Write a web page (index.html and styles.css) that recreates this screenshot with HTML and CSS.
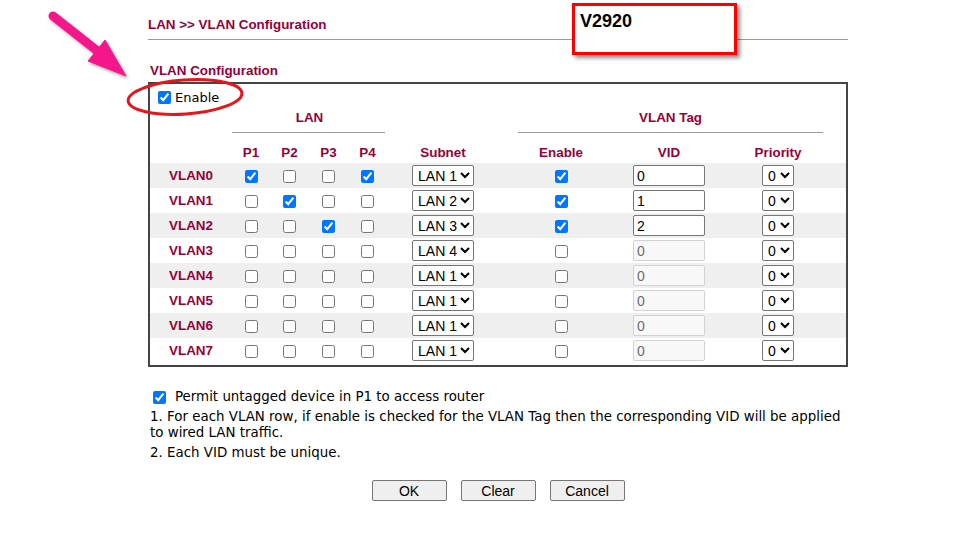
FILE: index.html
```html
<!DOCTYPE html>
<html lang="en">
<head>
    <meta charset="UTF-8">
    <title>LAN >> VLAN Configuration</title>
    <link rel="stylesheet" href="styles.css">
</head>
<body>
    <div class="page">
        <div class="page-title">LAN &gt;&gt; VLAN Configuration</div>
        <div class="section-title">VLAN Configuration</div>

        <div class="vlan-box">
            <label class="enable-row"><input type="checkbox" checked> Enable</label>
            <table class="vlan-table">
                <colgroup>
                    <col style="width:82px"><col style="width:38px"><col style="width:39px"><col style="width:39px"><col style="width:39px">
                    <col style="width:112px"><col style="width:124px"><col style="width:92px"><col style="width:131px">
                </colgroup>
                <tr class="group-row">
                    <td></td>
                    <td colspan="4"><div class="group lan">LAN</div></td>
                    <td></td>
                    <td colspan="3"><div class="group tag">VLAN Tag</div></td>
                </tr>
                <tr class="head-row">
                    <td></td>
                    <th>P1</th><th>P2</th><th>P3</th><th>P4</th>
                    <th>Subnet</th><th>Enable</th><th>VID</th><th class="prio">Priority</th>
                </tr>
            </table>
        </div>

        <div class="notes">
            <label class="permit"><input type="checkbox" checked> Permit untagged device in P1 to access router</label>
            <p>1. For each VLAN row, if enable is checked for the VLAN Tag then the corresponding VID will be applied to wired LAN traffic.</p>
            <p>2. Each VID must be unique.</p>
        </div>

        <div class="buttons">
            <button>OK</button>
            <button>Clear</button>
            <button>Cancel</button>
        </div>
    </div>

    <div class="model-tag">V2920</div>

    <svg class="arrow" width="100" height="90" viewBox="0 0 100 90">
        <defs>
            <filter id="shade" x="-20%" y="-20%" width="150%" height="150%">
                <feDropShadow dx="1.5" dy="2" stdDeviation="1.5" flood-color="#000" flood-opacity="0.35"/>
            </filter>
        </defs>
        <g filter="url(#shade)" fill="#f5168c" stroke="#f5168c">
            <line x1="13" y1="11" x2="60" y2="48" stroke-width="9" stroke-linecap="round"/>
            <polygon points="48,56 65,35 86,71" stroke-width="1" stroke-linejoin="round"/>
        </g>
    </svg>

    <svg class="circle" width="130" height="50" viewBox="0 0 130 50">
        <ellipse cx="65" cy="25" rx="57" ry="17" transform="rotate(-4 65 25)" fill="none" stroke="#e8141c" stroke-width="3"/>
    </svg>

    <script>
        var rows = [
            { p: [1, 0, 0, 1], lan: 1, tag: 1, vid: 0 },
            { p: [0, 1, 0, 0], lan: 2, tag: 1, vid: 1 },
            { p: [0, 0, 1, 0], lan: 3, tag: 1, vid: 2 },
            { p: [0, 0, 0, 0], lan: 4, tag: 0, vid: 0 },
            { p: [0, 0, 0, 0], lan: 1, tag: 0, vid: 0 },
            { p: [0, 0, 0, 0], lan: 1, tag: 0, vid: 0 },
            { p: [0, 0, 0, 0], lan: 1, tag: 0, vid: 0 },
            { p: [0, 0, 0, 0], lan: 1, tag: 0, vid: 0 }
        ];
        var table = document.querySelector(".vlan-table");
        rows.forEach(function (r, i) {
            var tr = document.createElement("tr");
            tr.className = "data-row" + (i % 2 === 0 ? " shaded" : "");
            var html = '<td class="name">VLAN' + i + '</td>';
            r.p.forEach(function (c) {
                html += '<td><input type="checkbox"' + (c ? ' checked' : '') + '></td>';
            });
            html += '<td><select class="subnet">';
            for (var n = 1; n <= 4; n++) {
                html += '<option' + (n === r.lan ? ' selected' : '') + '>LAN ' + n + '</option>';
            }
            html += '</select></td>';
            html += '<td><input type="checkbox"' + (r.tag ? ' checked' : '') + '></td>';
            html += '<td><input type="text" class="vid" value="' + r.vid + '"' + (r.tag ? '' : ' disabled') + '></td>';
            html += '<td class="prio"><select class="priority"><option>0</option><option>1</option><option>2</option></select></td>';
            tr.innerHTML = html;
            table.appendChild(tr);
        });
    </script>
</body>
</html>
```

FILE: styles.css
```css
* {
    box-sizing: border-box;
}
body {
    margin: 0;
    background: #fff;
    font-family: "Liberation Sans", Arial, sans-serif;
    color: #000;
}
.page {
    width: 700px;
    margin-left: 148px;
}
.page-title {
    padding-top: 17px;
    padding-bottom: 6px;
    line-height: 16px;
    font-size: 13.4px;
    font-weight: bold;
    color: #960039;
    border-bottom: 1px solid #9a9a9a;
}
.section-title {
    margin-top: 23px;
    margin-left: 2px;
    line-height: 16px;
    font-size: 13.4px;
    font-weight: bold;
    color: #960039;
}
.vlan-box {
    margin-top: 3px;
    padding-bottom: 2px;
    border: 2px solid #444;
}
.enable-row {
    display: flex;
    align-items: center;
    height: 24px;
    padding-left: 4px;
    padding-top: 3px;
    font-family: "DejaVu Sans", sans-serif;
    font-size: 13px;
}
.enable-row input {
    margin: 0 4px 0 4px;
    width: 13px;
    height: 13px;
}
.vlan-table {
    width: 696px;
    table-layout: fixed;
    border-collapse: collapse;
    font-size: 13.4px;
    font-weight: bold;
    color: #960039;
}
.vlan-table td, .vlan-table th {
    padding: 0;
    text-align: center;
}
.group-row td {
    height: 27px;
    vertical-align: top;
}
.group {
    padding-top: 2px;
    line-height: 16px;
}
.group::after {
    content: "";
    display: block;
    margin-top: 6px;
    border-bottom: 1px solid #9a9a9a;
}
.group.lan::after {
    margin-right: 2px;
}
.group.tag {
    margin-left: 19px;
    margin-right: 23px;
}
.head-row th {
    height: 28px;
    vertical-align: bottom;
    padding-bottom: 2px;
    line-height: 16px;
    font-size: 13.4px;
}
.vlan-table .prio {
    padding-right: 5px;
}
.data-row td {
    height: 25px;
    vertical-align: middle;
}
.data-row.shaded {
    background: #efefef;
}
.data-row input[type="checkbox"] {
    margin: 0;
    width: 13px;
    height: 13px;
    vertical-align: middle;
}
select {
    height: 21px;
    font-family: "Liberation Sans", Arial, sans-serif;
    font-size: 14px;
    color: #000;
    background: #fff;
    border: 1px solid #767676;
    border-radius: 2px;
    padding: 0 0 0 1px;
    vertical-align: middle;
}
.subnet {
    width: 62px;
}
.priority {
    width: 32px;
}
.vid {
    width: 72px;
    height: 21px;
    padding: 0 3px;
    font-family: "Liberation Sans", Arial, sans-serif;
    font-size: 14px;
    font-weight: normal;
    color: #000;
    border: 1px solid #767676;
    border-radius: 2px;
    background: #fff;
    vertical-align: middle;
}
.vid:disabled {
    background: #f8f8f8;
    border-color: #d2d2d2;
    color: #6d6d6d;
}
.notes {
    margin-top: 22px;
    padding-left: 2px;
    font-family: "DejaVu Sans", sans-serif;
    font-size: 13.4px;
    line-height: 16px;
}
.permit {
    display: flex;
    align-items: center;
    height: 16px;
}
.permit input {
    margin: 0 9px 0 3px;
    width: 13px;
    height: 13px;
}
.notes p {
    margin: 4px 0 0;
}
.buttons {
    margin-top: 19px;
    display: flex;
    justify-content: center;
    gap: 14px;
}
.buttons button {
    width: 75px;
    height: 21px;
    padding: 0;
    font-family: "Liberation Sans", Arial, sans-serif;
    font-size: 14px;
    color: #000;
    background: #efefef;
    border: 1px solid #767676;
    border-radius: 2px;
}
.model-tag {
    position: absolute;
    left: 572px;
    top: 3px;
    width: 165px;
    height: 52px;
    padding: 5px 5px 0;
    border: 3px solid #f00;
    background: #fff;
    box-shadow: 3px 3px 4px rgba(0, 0, 0, 0.45);
    font-family: "Liberation Sans", Arial, sans-serif;
    font-size: 18px;
    font-weight: bold;
    line-height: 21px;
}
.arrow {
    position: absolute;
    left: 40px;
    top: 5px;
}
.circle {
    position: absolute;
    left: 120px;
    top: 72px;
}
```
